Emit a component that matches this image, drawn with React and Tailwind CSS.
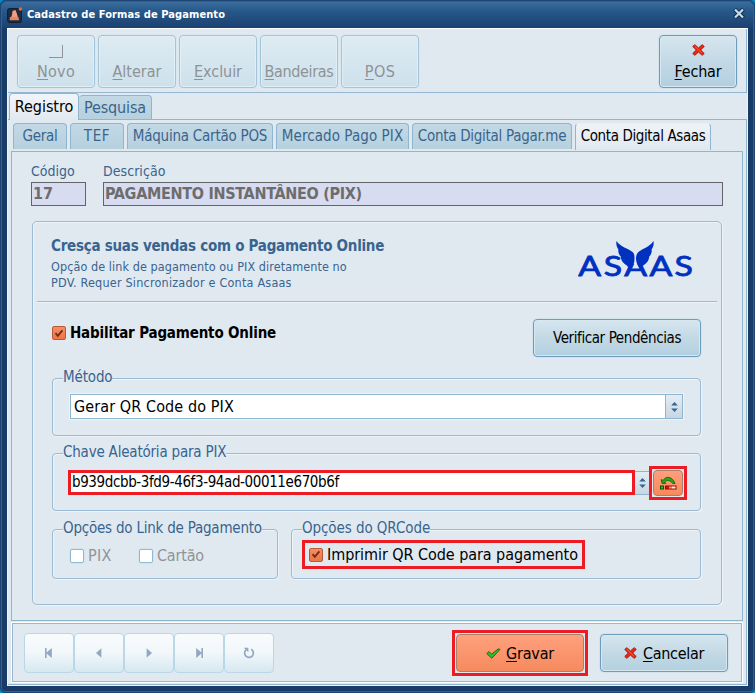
import clsx from "clsx";

const toolbar = [
  { first: "N", rest: "ovo", tracking: "tracking-[0.3px]", page: true },
  { first: "A", rest: "lterar", tracking: "tracking-[0px]" },
  { first: "E", rest: "xcluir", tracking: "tracking-[-0.05px]" },
  { first: "B", rest: "andeiras", tracking: "tracking-[-0.35px]" },
  { first: "P", rest: "OS", tracking: "tracking-[0.4px]" },
];

const accountTabs = [
  { label: "Geral", width: "w-[54px]", tracking: "tracking-[-0.25px]" },
  { label: "TEF", width: "w-[54px]", tracking: "tracking-[0.6px]" },
  { label: "Máquina Cartão POS", width: "w-[146px]", tracking: "tracking-[-0.23px]" },
  { label: "Mercado Pago PIX", width: "w-[133px]", tracking: "tracking-[0.08px]" },
  { label: "Conta Digital Pagar.me", width: "w-[160px]", tracking: "tracking-[-0.28px]" },
  { label: "Conta Digital Asaas", width: "w-[136px]", tracking: "tracking-[-0.38px]", active: true },
];

function RedCross() {
  return (
    <svg width="13" height="12" viewBox="0 0 14 13" className="shrink-0">
      <path
        d="M3 .7 7 4.2 11 .7 13.2 2.6 9.4 6.5 13.2 10.3 11 12.3 7 8.8 3 12.3 .8 10.3 4.6 6.5 .8 2.6Z"
        fill="#f0260e"
        stroke="#8c1007"
        strokeWidth="0.9"
      />
      <path d="M3 2.4 10.8 10" stroke="#ff6a4a" strokeWidth="0.9" />
    </svg>
  );
}

function GreenCheck() {
  return (
    <svg width="15" height="11" viewBox="0 0 15 11" className="shrink-0">
      <path d="M.8 5.6 3 3.6 5.6 6.2 12.2.9 14 1.4 5.8 10.2Z" fill="#35bd2b" stroke="#15700f" strokeWidth="1" />
    </svg>
  );
}

function GenerateKeyIcon() {
  return (
    <svg width="17" height="14" viewBox="0 0 17 14">
      <path d="M1.2 3.6 2 7.4H5.8L4.7 6C7 3.6 10.4 4.2 12.6 7.4H15C12.4.6 6.2-.8 3.2 4.4Z" fill="#27a51c" stroke="#0d5c08" strokeWidth="0.8" />
      <rect x="0.5" y="10" width="3" height="3" fill="#38bb2c" stroke="#0b4d07" />
      <rect x="5.5" y="10" width="10.5" height="3" fill="#d81407" stroke="#8e0b03" />
      <rect x="9" y="10.5" width="3" height="2" fill="#f58a76" />
      <rect x="12" y="10.5" width="3.5" height="2" fill="#fff1ec" />
    </svg>
  );
}

function AppIcon() {
  return (
    <svg width="16" height="16" viewBox="0 0 16 16">
      <rect x="0.5" y="1.5" width="14" height="14" rx="2" fill="#1b2c42" stroke="#0f2036" />
      <path d="M5.5 4 8.5 3 10 7 11.5 13H3L5 8Z" fill="#f0a080" />
      <path d="M3 10H11.5L12 13.2H2.6Z" fill="#e8855c" />
      <circle cx="13.4" cy="2" r="1.8" fill="#f26a1b" />
    </svg>
  );
}

function AsaasLogo() {
  return (
    <svg width="116" height="46" viewBox="0 0 116 46" fill="#0030c0">
      <defs>
        <clipPath id="below-wings">
          <rect x="40" y="24" width="34" height="16" />
        </clipPath>
      </defs>
      <g
        transform="translate(0 35.5) scale(1.25 1)"
        fontFamily="Lato, sans-serif"
        fontSize="27"
        stroke="#0030c0"
        strokeWidth="0.8"
      >
        <text x="0.3 20.6">AS</text>
        <text x="57.2 77.2">AS</text>
      </g>
      <g clipPath="url(#below-wings)">
        <text
          transform="translate(46.2 35.5) scale(1.25 1)"
          fontFamily="Lato, sans-serif"
          fontSize="27"
          stroke="#0030c0"
          strokeWidth="0.8"
        >
          A
        </text>
      </g>
      <path d="M38.6 1C37.8 4 38.6 7 40.4 9.4 39.8 12 41.2 15 42.8 16.6 42.8 20 45 23.6 48.6 25.2L52 29.5C57.4 24 58.6 16 54.6 12 50 8 42.6 7.4 38.6 1Z" />
      <path d="M75.4 1C76.2 4 75.4 7 73.6 9.4 74.2 12 72.8 15 71.2 16.6 71.2 20 69 23.6 65.4 25.2L63 29.5C57.4 24 56.4 16 60.4 12 65 8 71.4 7.4 75.4 1Z" />
      <path d="M57.2 11V25" stroke="#e1e9f0" strokeWidth="1.3" />
    </svg>
  );
}

function Checkbox({ checked }) {
  if (!checked) {
    return <span className="size-3.5 shrink-0 rounded-[2px] border border-[#8fb8d3] bg-white shadow-[0_0_0_1px_#d5e3ed]" />;
  }
  return (
    <span className="flex size-3.5 shrink-0 items-center justify-center rounded-[2px] border border-[#b85a38] bg-linear-to-b from-[#f68d62] to-[#ee7546]">
      <svg width="10" height="9" viewBox="0 0 10 9" fill="none">
        <path d="M1.5 4.2 3.8 6.8 8.4 1.4" stroke="#6b2f1c" strokeWidth="1.9" />
      </svg>
    </span>
  );
}

function Spinner({ className }) {
  return (
    <span className={clsx("flex shrink-0 items-center justify-center bg-linear-to-b from-[#e4edf4] to-[#c6d6e2]", className)}>
      <svg width="7" height="10" viewBox="0 0 7 10" fill="#2f6697">
        <path d="M3.5 0 6.8 3.5H.2Z" />
        <path d="M3.5 10 6.8 6.5H.2Z" />
      </svg>
    </span>
  );
}

function Button({ className, children }) {
  return (
    <button
      type="button"
      className={clsx(
        "flex shrink-0 items-center justify-center rounded-[4px] border border-[#6c9dbf] bg-linear-to-b from-[#d6e6ef] via-[#c3d9e5] via-50% to-[#b2d0e0] text-black shadow-[0_0_0_1px_#d3e3ec,inset_0_0_0_1px_#d6e7f0]",
        className
      )}
    >
      {children}
    </button>
  );
}

function Group({ label, tracking, className, children }) {
  return (
    <div className={clsx("relative rounded-[4px] border border-[#9bbad3] shadow-[inset_1px_1px_0_#edf3f8,1px_1px_0_#edf3f8]", className)}>
      <span className={clsx("absolute -top-[12px] left-[10px] bg-[#e1e9f0] text-[15px] leading-[20px] text-[#38648f]", tracking)}>
        {label}
      </span>
      {children}
    </div>
  );
}

function NavButton({ children }) {
  return (
    <button
      type="button"
      className="flex h-10 w-[50px] items-center justify-center rounded-[4px] border border-[#b9d7e6] bg-linear-to-b from-[#f8fbfc] via-[#f1f7fa] via-50% to-[#d6e8f0]"
    >
      <svg width="12" height="12" viewBox="0 0 12 12" fill="#92a7c2">
        {children}
      </svg>
    </button>
  );
}

export default function App() {
  return (
    <div className="h-[693px] w-[755px] bg-[#0b87c4] font-['DejaVu_Sans_Condensed','DejaVu_Sans',sans-serif] whitespace-nowrap">
      <div className="flex h-full flex-col rounded-[5px] border border-[#1c4574] bg-[#183b68] px-[6px] pb-[6px] shadow-[inset_0_0_0_1px_#2f6291]">
        {/* Title bar */}
        <div className="-mx-[5px] mt-px flex h-[26px] shrink-0 items-center rounded-t-[4px] bg-linear-to-b from-[#3a6d9d] from-0% via-[#26588a] via-35% to-[#1b4070] pr-[8px] pl-[5px]">
          <AppIcon />
          <span className="ml-[4px] text-[11px] leading-4 font-bold tracking-[0.09px] text-white">
            Cadastro de Formas de Pagamento
          </span>
          <svg width="12" height="11" viewBox="0 0 12 11" className="mb-[3px] ml-auto">
            <path d="M1.5 1.2 10.5 9.8M10.5 1.2 1.5 9.8" stroke="#0f2d52" strokeWidth="4" />
            <path d="M2 1.4 10 9.6M10 1.4 2 9.6" stroke="#c9dbe9" strokeWidth="2.2" />
          </svg>
        </div>

        <div className="flex h-[658px] flex-col border border-t-white border-r-[#eef4f8] border-b-[#eef4f8] border-l-[#eef4f8] bg-[#e1e9f0]">
          {/* Toolbar */}
          <div className="flex h-[64px] shrink-0 justify-between border-r border-b border-[#94b8d3] px-[9px] pt-[6px]">
            <div className="flex gap-[3px]">
              {toolbar.map((item) => (
                <button
                  key={item.first}
                  type="button"
                  className="flex h-[53px] w-[78px] flex-col items-center justify-end rounded-[4px] border border-[#a3c5da] bg-linear-to-b from-[#deebf2] to-[#cde1ec] pb-[5px] text-[16px] leading-5 text-[#8f9295] shadow-[inset_0_0_0_1px_#e1eff5,0_0_0_1px_#dbe7ef]"
                >
                  {item.page && <span className="mb-[4px] h-[13px] w-[14px] border-r border-b border-[#909498]" />}
                  <span className={item.tracking}>
                    <span className="underline underline-offset-2">{item.first}</span>
                    {item.rest}
                  </span>
                </button>
              ))}
            </div>
            <Button className="h-[53px] w-[78px] flex-col pt-[3px] text-[16px] leading-5 tracking-[-0.2px]">
              <RedCross />
              <span className="mt-[6px]">
                <span className="underline underline-offset-2">F</span>echar
              </span>
            </Button>
          </div>

          {/* Main tabs */}
          <div className="relative z-10 -mb-px flex h-[27px] shrink-0 items-end pl-px text-[16px]">
            <div className="flex h-[27px] w-[70px] items-center justify-center rounded-t-[4px] border border-b-0 border-[#8fb5cf] bg-linear-to-b from-[#f1f5f9] to-[#e1e9f0] tracking-[-0.06px] text-black">
              Registro
            </div>
            <div className="mb-px flex h-[24px] w-[73px] items-center justify-center rounded-t-[4px] border border-b-0 border-l-0 border-[#8fb5cf] bg-linear-to-b from-[#c3d9e5] to-[#b6d0de] tracking-[-0.14px] text-[#3a648c]">
              Pesquisa
            </div>
          </div>

          <div className="flex h-[566px] shrink-0 flex-col border-t border-r border-b border-[#8fb5cf] pr-[3px] pl-[3px]">
            {/* Account tabs */}
            <div className="relative z-10 mt-[3px] flex h-[28px] shrink-0 items-start gap-[3px] pl-[2px] text-[15px]">
              {accountTabs.map((tab) => (
                <div
                  key={tab.label}
                  className={clsx(
                    "flex shrink-0 items-center justify-center rounded-t-[4px] border border-b-0",
                    tab.width,
                    tab.tracking,
                    tab.active
                      ? "h-[27px] border-x-[#8fb5cf] border-t-[#e8eff5] bg-linear-to-b from-[#eef3f7] to-[#e1e9f0] pb-px text-black"
                      : "h-[26px] border-[#8fb5cf] bg-linear-to-b from-[#c3d9e5] to-[#b6d0de] text-[#3a648c]"
                  )}
                >
                  {tab.label}
                </div>
              ))}
            </div>

            {/* Tab page */}
            <div className="flex h-[470px] shrink-0 flex-col border border-[#8fb5cf] pr-[19px] pl-[19px]">
              <div className="mt-[9px] flex gap-[17px] text-[14px] leading-5 text-[#3a648c]">
                <div className="w-[55px]">
                  <span className="block tracking-[0px]">Código</span>
                  <div className="mt-px h-6 border border-[#626468] bg-[#d8dcf0] pl-px text-[16px] leading-[22px] font-bold text-[#6d6d6d]">17</div>
                </div>
                <div className="flex-1">
                  <span className="block tracking-[0.05px]">Descrição</span>
                  <div className="mt-px h-6 border border-[#626468] bg-[#d8dcf0] pl-px text-[16px] leading-[22px] font-bold tracking-[-0.3px] text-[#6d6d6d]">
                    PAGAMENTO INSTANTÂNEO (PIX)
                  </div>
                </div>
              </div>

              <div className="mt-[15px] ml-px flex h-[384px] w-[690px] flex-col rounded-[5px] border border-[#9bbad3] px-[4px] shadow-[inset_1px_1px_0_#edf3f8,1px_1px_0_#edf3f8]">
                <div className="flex h-[80px] shrink-0 justify-between border-b border-[#9bbad3] pr-[23px] pl-[14px] shadow-[0_1px_0_#edf3f8]">
                  <div className="pt-[14px] text-[12.5px] leading-4 tracking-[0.08px] text-[#38648f]">
                    <h2 className="mb-[2px] text-[15px] leading-[21px] font-bold tracking-[-0.26px]">
                      Cresça suas vendas com o Pagamento Online
                    </h2>
                    <p>Opção de link de pagamento ou PIX diretamente no</p>
                    <p className="tracking-[0.21px]">PDV. Requer Sincronizador e Conta Asaas</p>
                  </div>
                  <div className="pt-[18px]">
                    <AsaasLogo />
                  </div>
                </div>

                <div className="mt-[17px] flex h-[38px] shrink-0 justify-between pr-[16px] pl-[15px]">
                  <label className="flex h-7 items-center gap-[4px] text-[15px] font-bold tracking-[-0.17px] text-black">
                    <Checkbox checked />
                    Habilitar Pagamento Online
                  </label>
                  <Button className="h-[38px] w-[168px] pt-px text-[15px] tracking-[-0.4px]">Verificar Pendências</Button>
                </div>

                <Group label="Método" tracking="tracking-[-0.15px]" className="mt-[21px] ml-[15px] h-[58px] w-[649px] shrink-0 px-[17px] pt-[15px]">
                  <div className="flex h-[25px] border border-[#8fb5cf] bg-white pl-[3px] shadow-[0_0_0_1px_#edf3f8]">
                    <span className="flex-1 text-[16px] leading-[23px] tracking-[0.1px] text-black">Gerar QR Code do PIX</span>
                    <Spinner className="w-[17px] border-l border-[#8fb5cf]" />
                  </div>
                </Group>

                <Group label="Chave Aleatória para PIX" tracking="tracking-[-0.2px]" className="mt-[17px] ml-[15px] flex h-[58px] w-[649px] shrink-0 pt-[12px] pl-[15px]">
                  <div className="mt-[4px] h-[25px] w-[567px] border-3 border-[#ed1c24] bg-white pl-px text-[15px] leading-[19px] tracking-[-0.39px] text-black">
                    b939dcbb-3fd9-46f3-94ad-00011e670b6f
                  </div>
                  <Spinner className="mt-[5px] h-[24px] w-[14px] border-y border-[#8fb5cf]" />
                  <div className="h-[34px] w-[38px] border-3 border-[#ed1c24] bg-[#e1e9f0] p-px">
                    <div className="flex h-full items-center justify-center rounded-[4px] border border-[#a3826f] bg-linear-to-b from-[#ff9f7c] to-[#f68a5c]">
                      <GenerateKeyIcon />
                    </div>
                  </div>
                </Group>

                <div className="mt-[18px] ml-[15px] flex shrink-0 gap-[13px]">
                  <Group label="Opções do Link de Pagamento" tracking="tracking-[-0.22px]" className="h-[50px] w-[226px] pt-[16px] pl-[17px]">
                    <div className="flex text-[16px] leading-5 text-[#909498]">
                      <label className="flex w-[69px] items-center gap-[4px] tracking-[0.3px]">
                        <Checkbox />
                        PIX
                      </label>
                      <label className="flex items-center gap-[4px] tracking-[-0.2px]">
                        <Checkbox />
                        Cartão
                      </label>
                    </div>
                  </Group>
                  <Group label="Opções do QRCode" tracking="tracking-[-0.08px]" className="h-[50px] w-[410px] pt-[10px] pl-[10px]">
                    <label className="flex h-[29px] w-[283px] items-center gap-[4px] border-3 border-[#ed1c24] pl-[4px] text-[16px] tracking-[-0.06px] text-black">
                      <Checkbox checked />
                      Imprimir QR Code para pagamento
                    </label>
                  </Group>
                </div>
              </div>
            </div>

            {/* Bottom bar */}
            <div className="mt-px flex h-[61px] shrink-0 items-start justify-between border border-white">
              <div className="flex h-[59px] w-full justify-between border border-[#9bb4cf] pr-[13px] pl-[11px]">
                <div className="mt-[9px] flex">
                  <NavButton>
                    <path d="M2 1H3.6V5.4L8.8 1V11L3.6 6.6V11H2Z" />
                  </NavButton>
                  <NavButton>
                    <path d="M8.4 1.2V10.8L3 6Z" />
                  </NavButton>
                  <NavButton>
                    <path d="M3.6 1.2V10.8L9 6Z" />
                  </NavButton>
                  <NavButton>
                    <path d="M10 1H8.4V5.4L3.2 1V11L8.4 6.6V11H10Z" />
                  </NavButton>
                  <NavButton>
                    <path d="M8.2 2.2A4.4 4.4 0 1 1 3.2 2.6" fill="none" stroke="#92a7c2" strokeWidth="1.7" />
                    <path d="M.8.8H5.4V5.2Z" />
                  </NavButton>
                </div>
                <div className="mt-[6px] flex gap-[12px] text-[16px]">
                  <div className="h-[46px] w-[136px] border-3 border-[#ed1c24] p-px">
                    <button
                      type="button"
                      className="flex h-full w-full items-center justify-center gap-[5px] rounded-[4px] border border-[#a3826f] bg-linear-to-b from-[#ffa07d] to-[#f68a5e] tracking-[-0.2px] text-black"
                    >
                      <GreenCheck />
                      <span className="pt-px">
                        <span className="underline underline-offset-2">G</span>ravar
                      </span>
                    </button>
                  </div>
                  <Button className="mt-[4px] h-[38px] w-[128px] gap-[6px] tracking-[-0.3px]">
                    <RedCross />
                    <span className="pt-px">
                      <span className="underline underline-offset-2">C</span>ancelar
                    </span>
                  </Button>
                </div>
              </div>
            </div>
          </div>
        </div>
      </div>
    </div>
  );
}
